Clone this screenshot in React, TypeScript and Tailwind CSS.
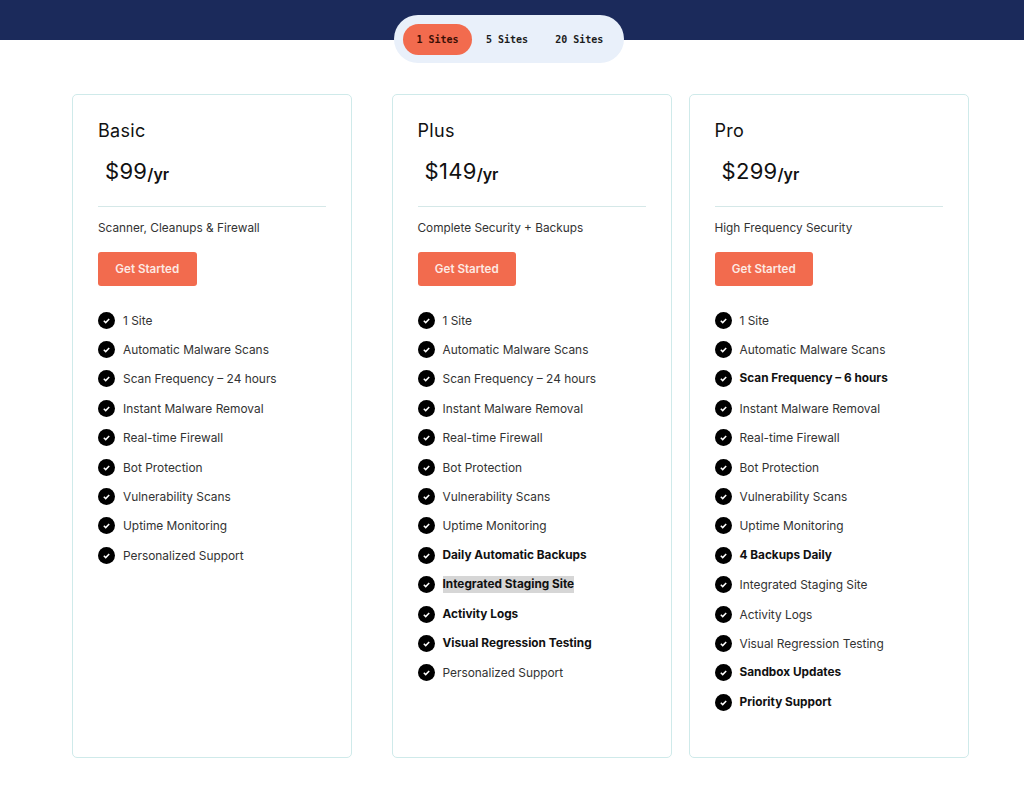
const BODY_FONT = "font-['Inter','Noto_Sans',sans-serif]";

type Feature = { label: string; bold?: boolean; marked?: boolean };

interface Plan {
  name: string;
  price: string;
  tagline: string;
  spacing: string;
  features: Feature[];
}

const plans: Plan[] = [
  {
    name: "Basic",
    price: "$99",
    tagline: "Scanner, Cleanups & Firewall",
    spacing: "",
    features: [
      { label: "1 Site" },
      { label: "Automatic Malware Scans" },
      { label: "Scan Frequency – 24 hours" },
      { label: "Instant Malware Removal" },
      { label: "Real-time Firewall" },
      { label: "Bot Protection" },
      { label: "Vulnerability Scans" },
      { label: "Uptime Monitoring" },
      { label: "Personalized Support" },
    ],
  },
  {
    name: "Plus",
    price: "$149",
    tagline: "Complete Security + Backups",
    spacing: "ml-[39.5px]",
    features: [
      { label: "1 Site" },
      { label: "Automatic Malware Scans" },
      { label: "Scan Frequency – 24 hours" },
      { label: "Instant Malware Removal" },
      { label: "Real-time Firewall" },
      { label: "Bot Protection" },
      { label: "Vulnerability Scans" },
      { label: "Uptime Monitoring" },
      { label: "Daily Automatic Backups", bold: true },
      { label: "Integrated Staging Site", bold: true, marked: true },
      { label: "Activity Logs", bold: true },
      { label: "Visual Regression Testing", bold: true },
      { label: "Personalized Support" },
    ],
  },
  {
    name: "Pro",
    price: "$299",
    tagline: "High Frequency Security",
    spacing: "ml-[17px]",
    features: [
      { label: "1 Site" },
      { label: "Automatic Malware Scans" },
      { label: "Scan Frequency – 6 hours", bold: true },
      { label: "Instant Malware Removal" },
      { label: "Real-time Firewall" },
      { label: "Bot Protection" },
      { label: "Vulnerability Scans" },
      { label: "Uptime Monitoring" },
      { label: "4 Backups Daily", bold: true },
      { label: "Integrated Staging Site" },
      { label: "Activity Logs" },
      { label: "Visual Regression Testing" },
      { label: "Sandbox Updates", bold: true },
      { label: "Priority Support", bold: true },
    ],
  },
];

function CheckIcon() {
  return (
    <svg viewBox="0 0 17 17" className="h-[17px] w-[17px] shrink-0">
      <circle cx="8.5" cy="8.5" r="8.5" fill="#000" />
      <path d="M5.8 8.7l1.9 1.9 3.5-3.7" fill="none" stroke="#fff" strokeWidth="1.5" />
    </svg>
  );
}

function PlanCard({ plan }: { plan: Plan }) {
  return (
    <div className={`h-[663.5px] w-[280px] shrink-0 rounded-[5px] border border-[#cfeaea] bg-white px-[25px] pt-[25px] ${plan.spacing}`}>
      <h2 className="text-[18px] leading-[22px] tracking-[0.3px] text-[#111]">{plan.name}</h2>

      <div className="mt-[15px] flex h-[28px] items-end pl-[7px] text-[#111]">
        <span className="text-[22px] leading-[28px] tracking-[0.3px]">{plan.price}</span>
        <span className="text-[16px] leading-[21px] font-semibold">/yr</span>
      </div>

      <div className="mt-[21px] h-px w-[228px] bg-[#d5e8e8]" />

      <p className="mt-[12.5px] text-[11.8px] leading-[17px] text-[#333]">{plan.tagline}</p>

      <button className="mt-[15.5px] block h-[34px] w-[98.5px] rounded-[3px] bg-[#f26b4e] pt-[2px] text-center text-[11.6px] font-semibold text-[#fde9e3]">
        Get Started
      </button>

      <ul className="mt-[25.5px] flex flex-col gap-[12.42px]">
        {plan.features.map((f) => (
          <li key={f.label} className="flex h-[17px] items-center gap-2">
            <CheckIcon />
            <span
              className={`leading-[17px] ${f.bold ? "text-[11.8px] font-bold text-[#111]" : "text-[11.9px] text-[#333]"} ${f.marked ? "bg-[#d6d6d6]" : ""}`}
            >
              {f.label}
            </span>
          </li>
        ))}
      </ul>
    </div>
  );
}

export default function App() {
  return (
    <main className={`min-h-[790px] bg-white ${BODY_FONT}`}>
      <div className="h-10 bg-[#1b2a5b]" />

      <div className="mx-auto mt-[-25px] ml-[394px] flex h-12 w-[230px] items-center rounded-3xl bg-[#e9f0fa] pl-[9px] font-['DejaVu_Sans_Mono',monospace] text-[10px] font-bold text-[#1c1c1c]">
        <div className="flex h-[31px] w-[69px] items-center justify-center rounded-2xl bg-[#f26b4e] text-[#3b0f05]">1 Sites</div>
        <div className="ml-[14px]">5 Sites</div>
        <div className="ml-[27px]">20 Sites</div>
      </div>

      <div className="mt-[31px] flex pl-[72px]">
        {plans.map((p) => (
          <PlanCard key={p.name} plan={p} />
        ))}
      </div>
    </main>
  );
}
